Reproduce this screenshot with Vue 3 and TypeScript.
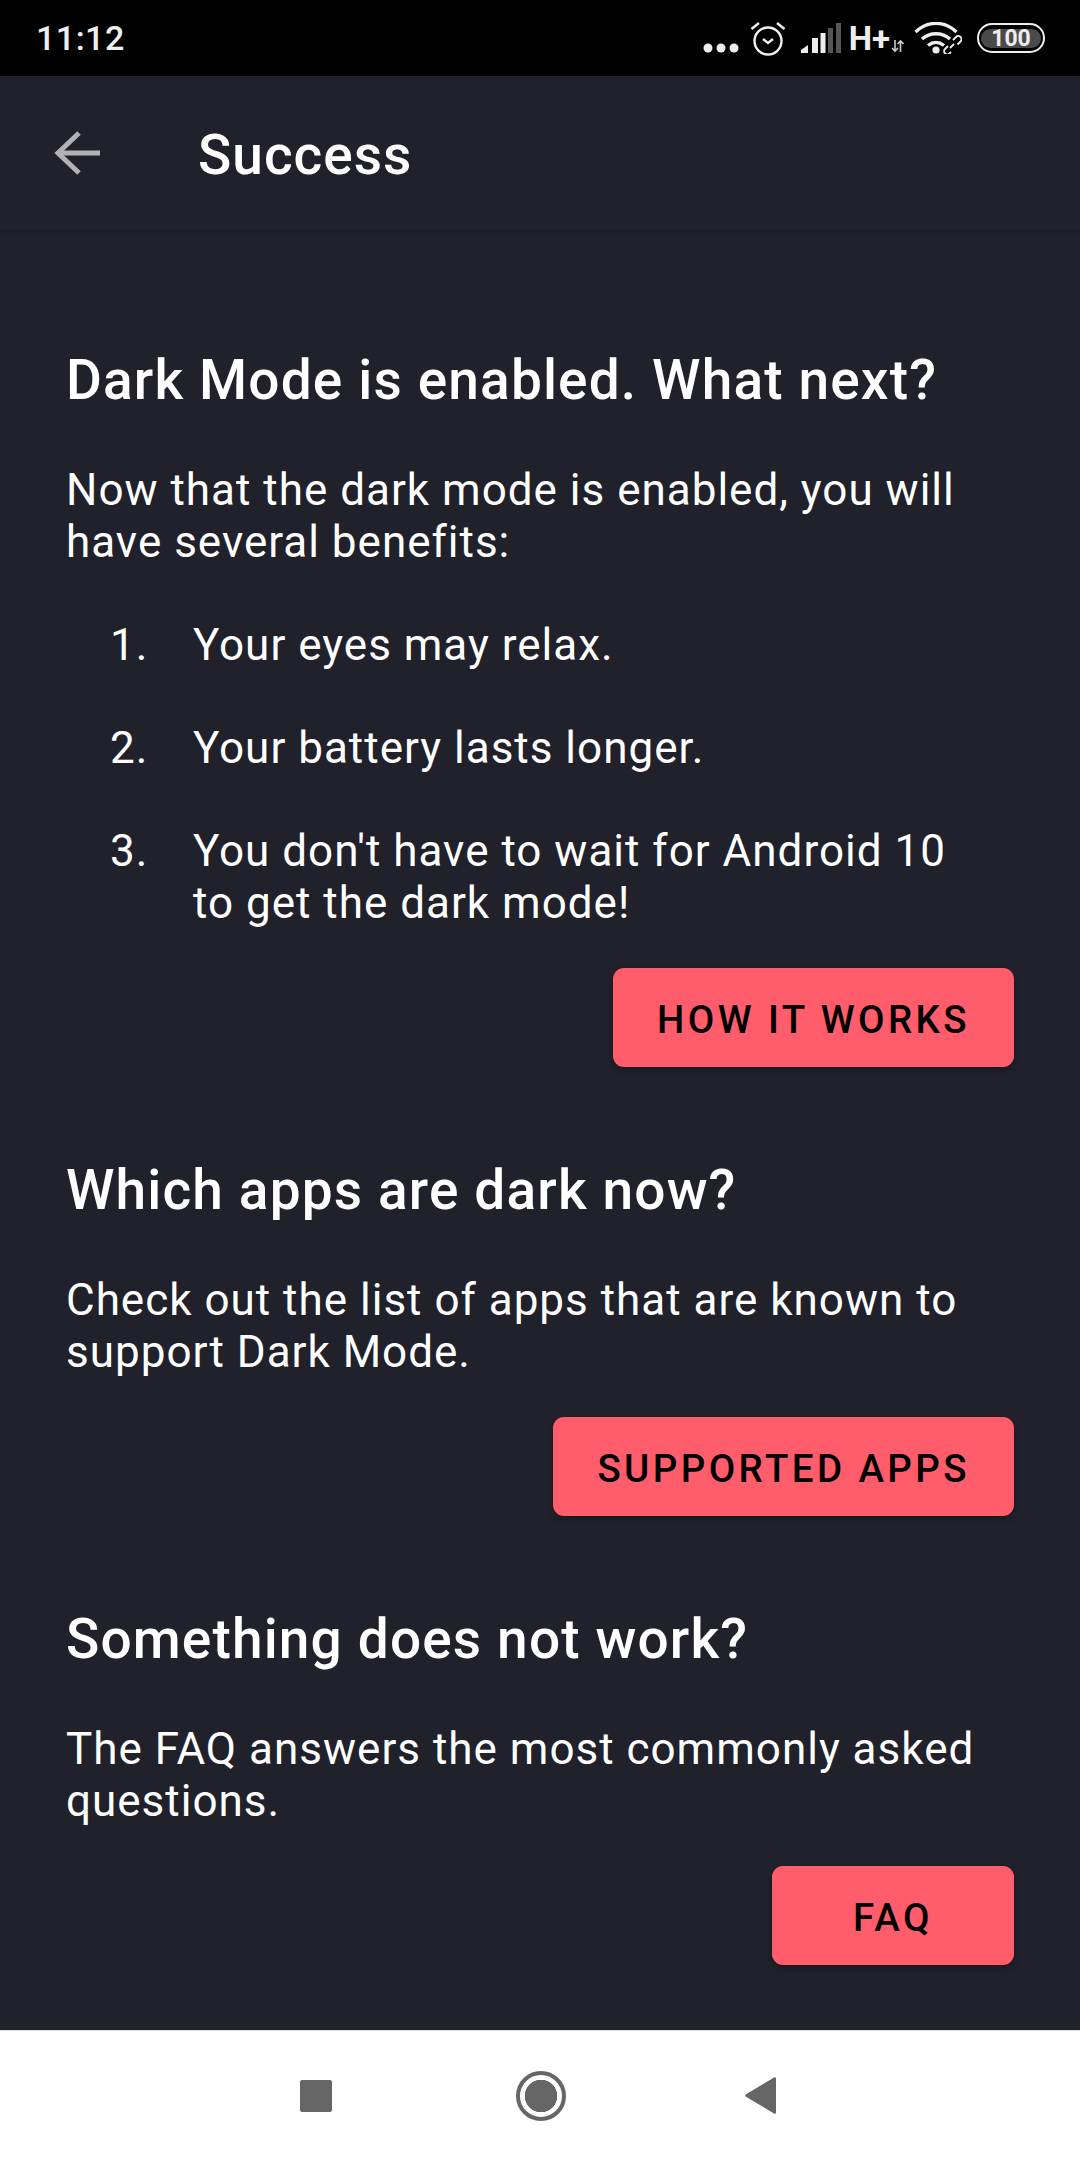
<script setup lang="ts">
interface Section {
  title: string
  body: string
  steps?: string[]
  action: string
}

const sections: Section[] = [
  {
    title: 'Dark Mode is enabled. What next?',
    body: 'Now that the dark mode is enabled, you will have several benefits:',
    steps: [
      'Your eyes may relax.',
      'Your battery lasts longer.',
      "You don't have to wait for Android 10 to get the dark mode!",
    ],
    action: 'How it works',
  },
  {
    title: 'Which apps are dark now?',
    body: 'Check out the list of apps that are known to support Dark Mode.',
    action: 'Supported apps',
  },
  {
    title: 'Something does not work?',
    body: 'The FAQ answers the most commonly asked questions.',
    action: 'FAQ',
  },
]
</script>

<template>
  <div class="screen">
    <header class="status">
      <span class="clock">11:12</span>
      <div class="status-icons">
        <svg class="ic-dots" width="36" height="10" viewBox="0 0 36 10" fill="#eee">
          <circle cx="5" cy="5" r="4.500" />
          <circle cx="18" cy="5" r="4.500" />
          <circle cx="31" cy="5" r="4.500" />
        </svg>
        <svg class="ic-alarm" width="36" height="36" viewBox="0 0 36 36" fill="none" stroke="#eee" stroke-width="2.400">
          <circle cx="18" cy="21" r="13.500" />
          <path d="M13 19l5 4 5-4" />
          <path d="M1.500 9 9 3M34.500 9 27 3" />
        </svg>
        <svg class="ic-signal" width="40" height="30" viewBox="0 0 40 30">
          <path d="M0 30v-3l7-5v8z" fill="#eee" />
          <rect x="11" y="15" width="6" height="15" fill="#eee" />
          <rect x="19.500" y="10" width="5" height="20" fill="#eee" />
          <rect x="27" y="5" width="5" height="25" fill="#555" />
          <rect x="35" y="0" width="5" height="30" fill="#555" />
        </svg>
        <span class="net">H+</span>
        <svg class="ic-updown" width="13" height="14" viewBox="0 0 13 14" fill="none" stroke="#ccc" stroke-width="1.600">
          <path d="M4 1v11M1 9l3 3 3-3" />
          <path d="M9.500 13V2M6.500 5l3-3 3 3" />
        </svg>
        <svg class="ic-wifi" width="48" height="32" viewBox="0 0 48 32" fill="none" stroke="#eee" stroke-width="3.400">
          <path d="M1.500 10c12-11.500 29-11.500 41 0" />
          <path d="M8 17c8-7 20-7 28 0" />
          <path d="M14 23.500c5-4 11-4 16 0" />
          <circle cx="22" cy="28" r="3.600" fill="#eee" stroke="none" />
          <path d="M36 26l4-4" stroke-width="1.800" />
          <path d="M37 30l-1.500 1.500a3 3 0 0 1-4.500-4.500l3-3" stroke-width="1.800" />
          <path d="M39 18l3-3a3 3 0 0 1 4.500 4.500l-3 3" stroke-width="1.800" />
        </svg>
        <div class="battery"><span>100</span></div>
      </div>
    </header>

    <div class="appbar">
      <svg class="back" width="46" height="44" viewBox="0 0 46 44" fill="none" stroke="#b2b2b5" stroke-width="5">
        <path d="M3 22h43" />
        <path d="M25 2 4 22l21 20" />
      </svg>
      <h1>Success</h1>
    </div>

    <main class="content">
      <section v-for="s in sections" :key="s.title" class="block">
        <h2>{{ s.title }}</h2>
        <p>{{ s.body }}</p>
        <ol v-if="s.steps">
          <li v-for="(step, i) in s.steps" :key="step">
            <span class="num">{{ i + 1 }}.</span>
            <span>{{ step }}</span>
          </li>
        </ol>
        <div class="actions">
          <button type="button">{{ s.action }}</button>
        </div>
      </section>
    </main>

    <footer class="navbar">
      <span class="nav-square"></span>
      <span class="nav-home"></span>
      <svg class="nav-back" width="31" height="37" viewBox="0 0 31 37" fill="#666">
        <path d="M29 .6c1-.6 2-.2 2 1.200v33.400c0 1.400-1 1.800-2 1.200L1 19.800c-1.200-.8-1.200-1.800 0-2.600z" />
      </svg>
    </footer>
  </div>
</template>

<style>
body {
  margin: 0;
  background: #20212b;
}
</style>

<style scoped>
.screen {
  width: 1080px;
  height: 2160px;
  display: flex;
  flex-direction: column;
  background: #20212b;
  color: #fff;
  font-family: Roboto, "Liberation Sans", sans-serif;
  overflow: hidden;
}
.status {
  height: 76px;
  flex: none;
  background: #000;
  display: flex;
  align-items: center;
  justify-content: space-between;
  padding: 0 35px 0 36px;
  box-sizing: border-box;
}
.clock {
  font-size: 34px;
  font-weight: 500;
  letter-spacing: 0.5px;
  color: #eee;
}
.status-icons {
  display: flex;
  align-items: center;
}
.ic-dots {
  margin-top: 20px;
}
.ic-alarm {
  margin-left: 11px;
}
.ic-signal {
  margin-left: 15px;
}
.net {
  font-size: 33px;
  font-weight: 700;
  color: #eee;
  margin-left: 8px;
  line-height: 1;
}
.ic-updown {
  margin-left: 1px;
  margin-top: 15px;
}
.ic-wifi {
  margin-left: 10px;
}
.battery {
  width: 68px;
  height: 30px;
  margin-left: 15px;
  box-sizing: border-box;
  border: 2.500px solid #eee;
  border-radius: 15px;
  display: flex;
  align-items: center;
  font-size: 23px;
  font-weight: 700;
  color: #eee;
}
.battery span {
  flex: 1;
  text-align: center;
  line-height: 19px;
  background: #4a4a4a;
  border-radius: 10px;
  margin: 0 2px;
}
.appbar {
  height: 154px;
  flex: none;
  display: flex;
  align-items: center;
  background: #20212b;
  box-shadow: 0 3px 4px rgba(0, 0, 0, 0.16);
  padding-left: 54px;
  box-sizing: border-box;
}
.back {
  flex: none;
}
h1 {
  margin: 0 0 0 98px;
  font-size: 55px;
  font-weight: 500;
  letter-spacing: 1px;
  line-height: 1;
  padding-top: 4px;
}
.content {
  flex: 1;
  min-height: 0;
  padding: 118px 66px 0;
  box-sizing: border-box;
}
.block {
  margin-bottom: 91px;
}
.block:last-child {
  margin-bottom: 0;
}
h2 {
  margin: 0 0 52px;
  font-size: 55px;
  font-weight: 500;
  line-height: 64px;
  letter-spacing: 1.150px;
}
p {
  margin: 0;
  font-size: 44px;
  line-height: 52px;
  letter-spacing: 1px;
}
ol {
  list-style: none;
  margin: 51px 0 0;
  padding: 0 24px 0 44px;
}
li {
  display: flex;
  font-size: 44px;
  line-height: 52px;
  letter-spacing: 1px;
  margin-bottom: 51px;
}
li:last-child {
  margin-bottom: 0;
}
.num {
  flex: none;
  width: 83px;
}
.actions {
  display: flex;
  justify-content: flex-end;
  margin-top: 39px;
}
button {
  height: 99px;
  min-width: 242px;
  padding: 3px 44px 0;
  border: 0;
  border-radius: 11px;
  background: #ff5c6c;
  color: #000;
  font-family: inherit;
  font-size: 38.500px;
  font-weight: 500;
  letter-spacing: 3.400px;
  text-transform: uppercase;
  box-shadow: 0 3px 6px rgba(0, 0, 0, 0.3);
}
.navbar {
  height: 130px;
  flex: none;
  background: #fff;
  border-top: 1px solid #ddd;
  box-sizing: border-box;
  display: flex;
  align-items: center;
  padding-left: 300px;
}
.nav-square {
  width: 32px;
  height: 32px;
  background: #666;
  border-radius: 2px;
}
.nav-home {
  width: 50px;
  height: 50px;
  margin-left: 184px;
  box-sizing: border-box;
  border: 4px solid #666;
  border-radius: 50%;
  background: radial-gradient(circle, #666 0 16px, #fff 16.500px);
}
.nav-back {
  margin-left: 179px;
}
</style>
